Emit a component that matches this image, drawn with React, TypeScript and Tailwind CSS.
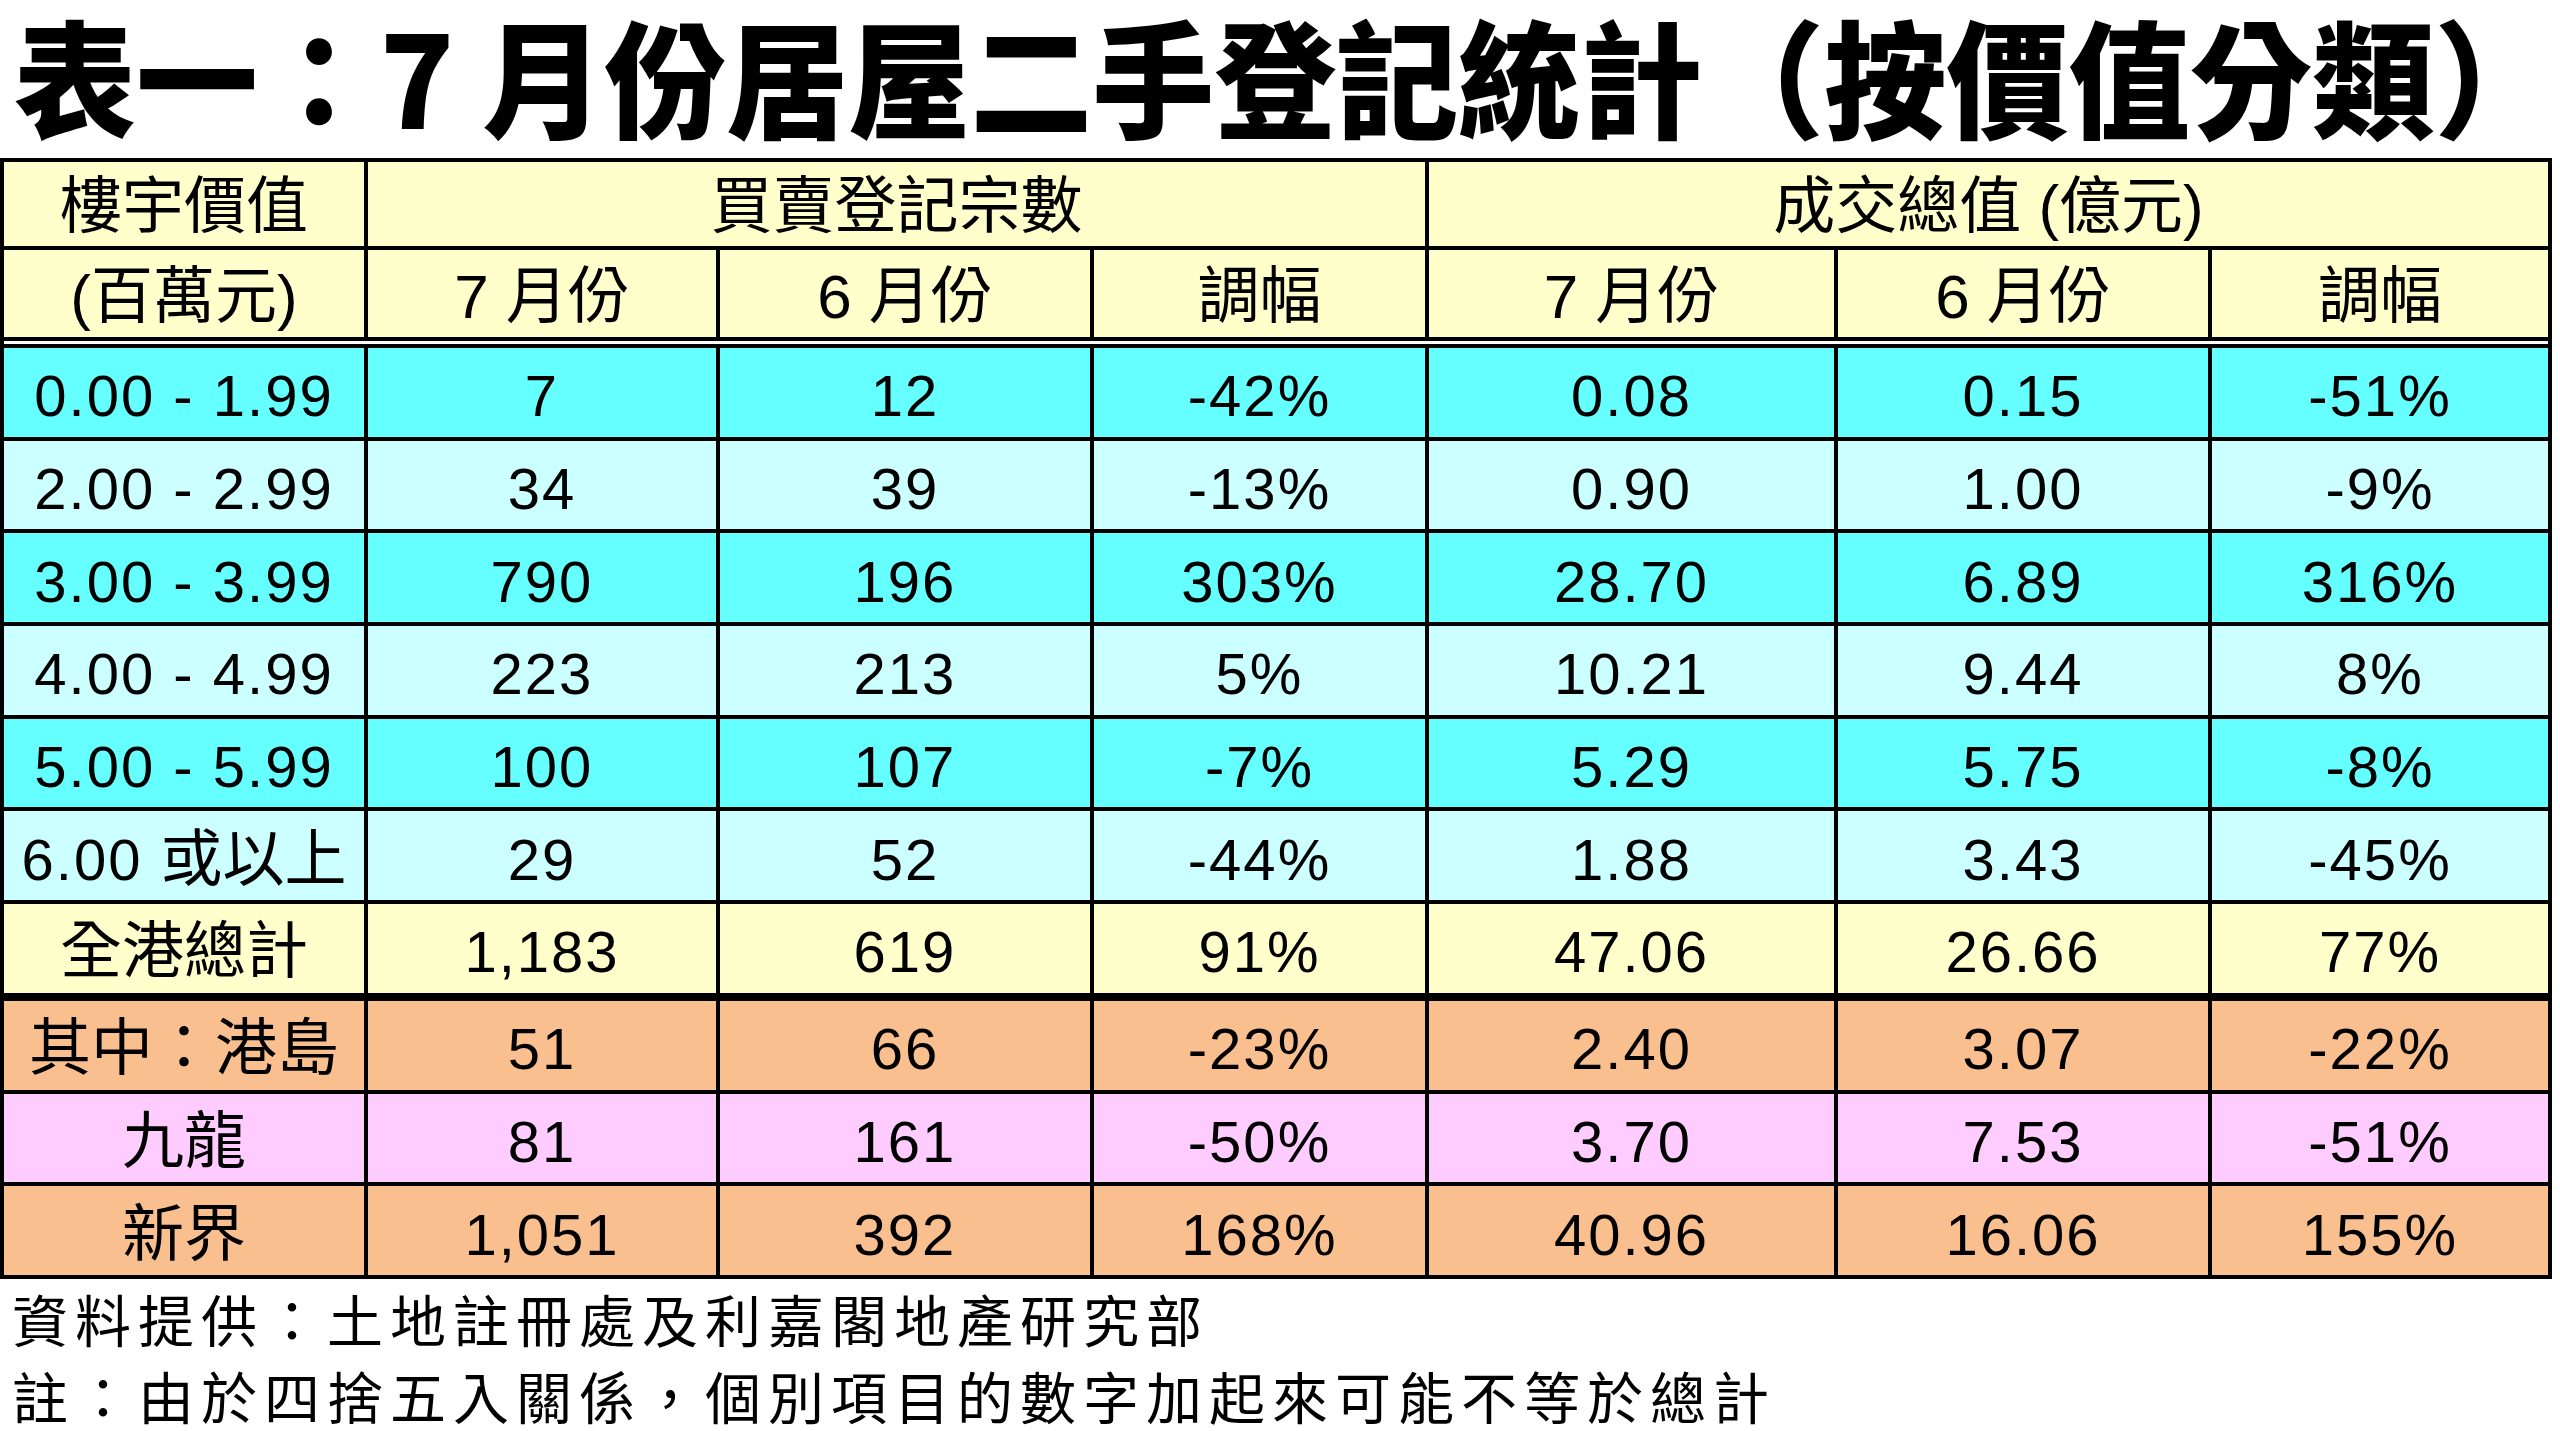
import * as React from 'react';

const Y = 'bg-[#FFFFCC]';
const C1 = 'bg-[#66FFFF]';
const C2 = 'bg-[#CCFFFF]';
const OR = 'bg-[#FABF8F]';
const PK = 'bg-[#FFCCFF]';

type Row = { label: React.ReactNode; cjk?: boolean; values: string[]; bg: string };

const rows: Row[] = [
  { label: '0.00 - 1.99', values: ['7', '12', '-42%', '0.08', '0.15', '-51%'], bg: C1 },
  { label: '2.00 - 2.99', values: ['34', '39', '-13%', '0.90', '1.00', '-9%'], bg: C2 },
  { label: '3.00 - 3.99', values: ['790', '196', '303%', '28.70', '6.89', '316%'], bg: C1 },
  { label: '4.00 - 4.99', values: ['223', '213', '5%', '10.21', '9.44', '8%'], bg: C2 },
  { label: '5.00 - 5.99', values: ['100', '107', '-7%', '5.29', '5.75', '-8%'], bg: C1 },
  {
    label: (
      <>
        <span>6.00</span>
        <span className="ml-[18px] text-[62px] tracking-normal">或以上</span>
      </>
    ),
    values: ['29', '52', '-44%', '1.88', '3.43', '-45%'],
    bg: C2,
  },
  { label: '全港總計', cjk: true, values: ['1,183', '619', '91%', '47.06', '26.66', '77%'], bg: Y },
];

const regions: Row[] = [
  { label: '其中：港島', cjk: true, values: ['51', '66', '-23%', '2.40', '3.07', '-22%'], bg: OR },
  { label: '九龍', cjk: true, values: ['81', '161', '-50%', '3.70', '7.53', '-51%'], bg: PK },
  { label: '新界', cjk: true, values: ['1,051', '392', '168%', '40.96', '16.06', '155%'], bg: OR },
];

function Cell({
  children,
  bg,
  className = '',
}: {
  children: React.ReactNode;
  bg: string;
  className?: string;
}) {
  return (
    <div className={`${bg} flex items-center justify-center whitespace-nowrap leading-none ${className}`}>
      {children}
    </div>
  );
}

function DataRow({ row }: { row: Row }) {
  return (
    <>
      <Cell bg={row.bg} className={`h-[88.7px] pt-[8px] ${row.cjk ? 'text-[62px]' : 'text-[58px] tracking-[2px]'}`}>
        {row.label}
      </Cell>
      {row.values.map((v, i) => (
        <Cell key={i} bg={row.bg} className="h-[88.7px] pt-[8px] text-[58px] tracking-[2px]">
          {v}
        </Cell>
      ))}
    </>
  );
}

export default function App() {
  return (
    <div className="w-[2560px] h-[1431px] bg-white text-black font-['Liberation_Sans','Noto_Sans_CJK_TC',sans-serif]">
      <div className="h-[158px] flex items-center pl-[14px] pb-[10px] font-['Noto_Sans_CJK_TC',sans-serif] font-black text-[122px] leading-[140px] whitespace-nowrap">
        <div className="scale-y-[1.04] origin-center">
          表一：7 月份居屋二手登記統計（按價值分類<span className="inline-block w-[64px]">）</span>
        </div>
      </div>

      <div className="w-[2552px] bg-black p-[4px] grid grid-cols-[360px_348px_370px_331px_405px_370px_336px] gap-[4px]">
        <Cell bg={Y} className="h-[84px] pt-[6px] text-[62px]">樓宇價值</Cell>
        <Cell bg={Y} className="col-span-3 h-[84px] pt-[6px] text-[62px]">買賣登記宗數</Cell>
        <Cell bg={Y} className="col-span-3 h-[84px] pt-[6px] text-[62px]">成交總值 (億元)</Cell>

        <Cell bg={Y} className="h-[87px] pt-[6px] text-[62px]">(百萬元)</Cell>
        <Cell bg={Y} className="h-[87px] pt-[6px] text-[62px]">7 月份</Cell>
        <Cell bg={Y} className="h-[87px] pt-[6px] text-[62px]">6 月份</Cell>
        <Cell bg={Y} className="h-[87px] pt-[6px] text-[62px]">調幅</Cell>
        <Cell bg={Y} className="h-[87px] pt-[6px] text-[62px]">7 月份</Cell>
        <Cell bg={Y} className="h-[87px] pt-[6px] text-[62px]">6 月份</Cell>
        <Cell bg={Y} className="h-[87px] pt-[6px] text-[62px]">調幅</Cell>

        <div className="col-span-7 h-[3px] bg-white" />

        {rows.map((r, i) => (
          <DataRow key={i} row={r} />
        ))}

        <div className="col-span-7 h-0" />

        {regions.map((r, i) => (
          <DataRow key={i} row={r} />
        ))}
      </div>

      <div className="pl-[12px] font-['Noto_Sans_CJK_TC',sans-serif] text-[56px] leading-[77px] tracking-[7px] whitespace-nowrap">
        <div>資料提供：土地註冊處及利嘉閣地產研究部</div>
        <div>註：由於四捨五入關係，個別項目的數字加起來可能不等於總計</div>
      </div>
    </div>
  );
}
